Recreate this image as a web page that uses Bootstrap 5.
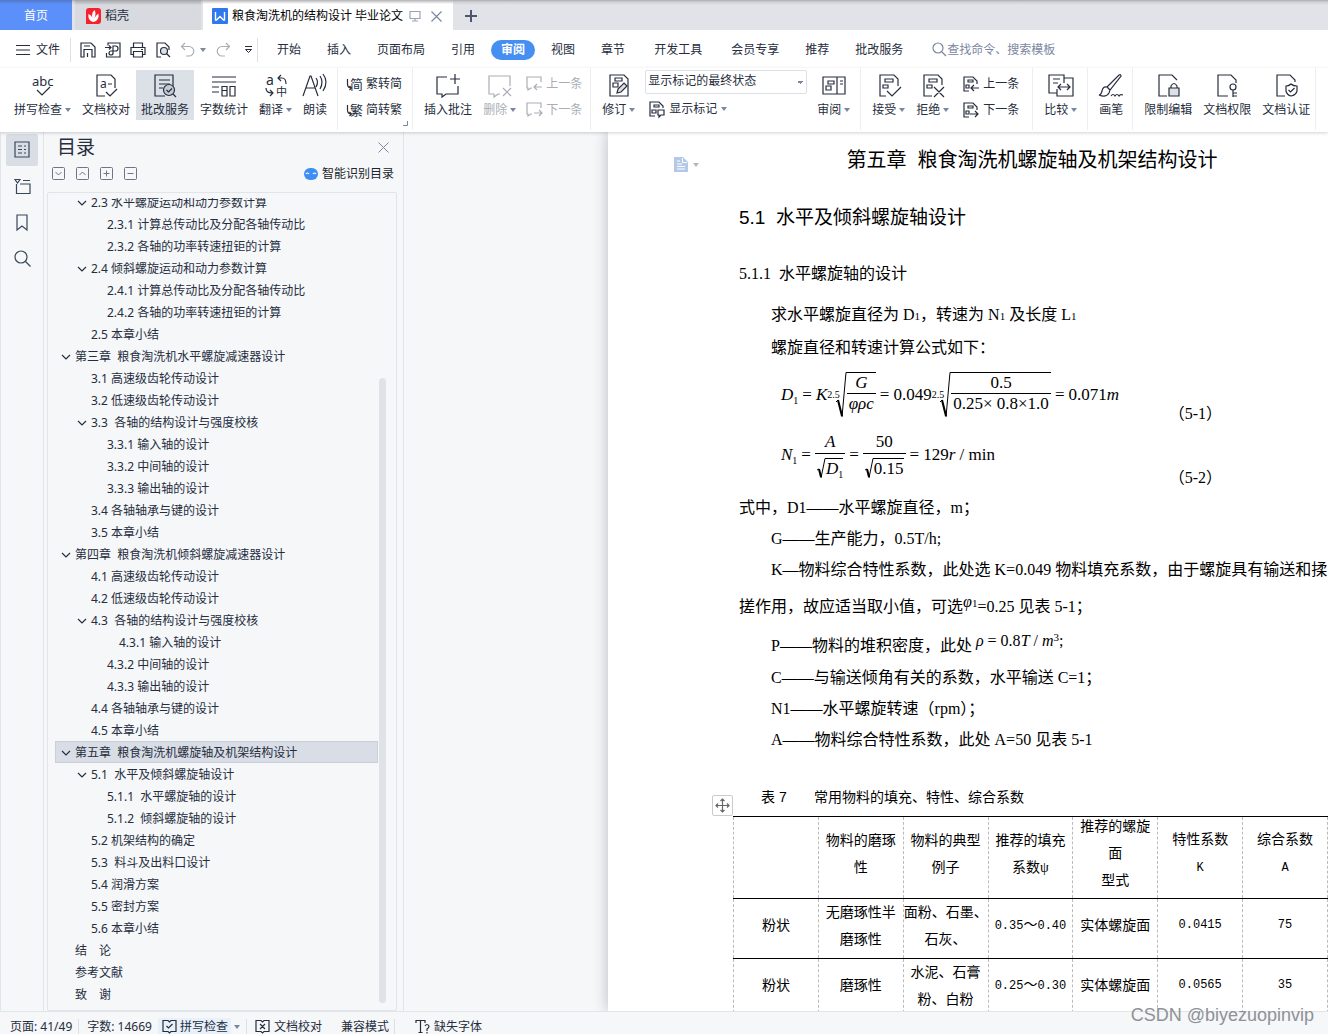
<!DOCTYPE html>
<html lang="zh-CN">
<head>
<meta charset="utf-8">
<meta name="viewport" content="width=device-width, initial-scale=1">
<title>粮食淘洗机的结构设计 毕业论文</title>
<link href="https://cdn.jsdelivr.net/npm/bootstrap@5.3.0/dist/css/bootstrap.min.css" rel="stylesheet">
<script src="https://cdn.jsdelivr.net/npm/bootstrap@5.3.0/dist/js/bootstrap.bundle.min.js"></script>
<style>
:root{--ink:#262d3d;--muted:#7b86a0;--line:#e1e4e9;--pane:#f5f7f9}
body{font-family:"Noto Sans","Noto Sans CJK SC",sans-serif;font-size:12px;line-height:18px;color:var(--ink);background:var(--pane)}
button{font:inherit;color:inherit;background:none;border:0;padding:0;white-space:nowrap}
a{color:inherit;text-decoration:none;white-space:nowrap}
svg{fill:none;stroke:currentColor;stroke-width:1.2;flex:none;display:block;overflow:visible}
svg text{fill:currentColor;stroke:none}
svg.solid{stroke:none}
svg.thin{stroke-width:1}
svg.bold{stroke-width:2}
.caret{border:3px solid transparent;border-top:4px solid var(--muted);border-bottom:0;flex:none}
.muted{color:var(--muted)}
/* title bar */
.titlebar{height:30px;background:linear-gradient(#a9aaad,#cfd0d3 2px,#e1e3e8 5px)}
.titlebar>*{padding-top:2px}
.tab-home{width:72px;background:linear-gradient(#5577c4,#5b90fa 4px);color:#fff}
.tab-doc{width:126px;margin-left:3px;padding-left:11px;background:linear-gradient(#a2a3a6,#d8dadf 5px)}
.tab-live{width:250px;margin-left:2px;padding-left:9px;background:linear-gradient(#b3b3b5,#fff 4px);color:#000}
.tab-new{margin-left:12px;color:#4c566c}
/* menu */
.menubar{height:38px;background:#fff;padding-top:1px}
.menubar .quick{gap:9px;padding-left:9px}
.file-menu{gap:6px;margin:0 10px 0 16px}
.vr-line{width:1px;height:24px;background:#dcdfe5}
.menu-start{margin-right:6px}
.menu-link{padding:0 13px}
.menu-link.shifted{margin-left:3px}
.menu-link.live{margin:0 3px;padding:0 10px;line-height:20px;border-radius:10px;background:#468ff2;color:#fff;font-weight:700}
.finder{border:0;outline:0;padding:0;width:160px;background:none;color:var(--muted)}
.finder::placeholder{color:var(--muted);opacity:1}
/* ribbon */
.ribbon{height:64px;background:#fff;box-shadow:0 1px 3px rgba(40,50,70,.22);position:relative;z-index:2;overflow:clip;overflow-clip-margin:4px}
.tool-group{display:flex;gap:1px;padding:2px 5px 0 6px;border-right:1px solid #eceef1;flex:none;height:62px}
.tool-group.first{padding:2px 5px 0 9px}
.tool{padding:4px 5px 0;height:50px;display:flex;flex-direction:column;align-items:center;gap:3px;flex:none}
.tool.on{background:#dbe1e7}
.tool-label{display:flex;align-items:center;gap:3px;line-height:18px}
.off{color:#a9adb5}
.tool-stack{display:flex;flex-direction:column;gap:8px;padding-top:5px}
.tool-row{display:flex;align-items:center;gap:4px;height:18px}
.markup{display:block;width:162px;height:24px;border:1px solid #dcdfe4;border-radius:2px;padding:0 14px 2px 2px;appearance:none;color:var(--ink);font:inherit;background:linear-gradient(to bottom left,var(--muted) 50%,transparent 50%) 151px 10px/3px 3px no-repeat,linear-gradient(to bottom right,var(--muted) 50%,transparent 50%) 154px 10px/3px 3px no-repeat,#fff}
/* workspace */
.workspace{min-height:0}
.rail{width:44px;border-right:1px solid var(--line);border-left:1px solid var(--line);padding:2px 5px;gap:4px;color:#39465c}
.rail button{width:32px;height:32px;display:flex;align-items:center;justify-content:center;border-radius:2px}
.rail .on{background:#d9dee5}
.toc{width:360px;border-right:1px solid var(--line);padding:0 6px 0 3px}
.toc-head{padding:0 8px 0 10px}
.toc-title{font-size:19px;line-height:30px;font-weight:400;margin:0}
.toc-tools{height:24px;padding:0 3px 0 5px;gap:10px;color:#6d7688}
.toc-frame{border:1px solid var(--line);border-radius:2px;margin-top:6px;padding:5px 10px 0 7px;min-height:0}
.toc-clip{overflow:hidden;min-height:0}
.toc-list{margin:-7px 0 0}
.toc-list a{display:flex;align-items:center;height:22px;padding:2px 0 0 19px;white-space:pre;border:1px solid transparent}
.toc-list a svg{margin:0 4px 0 -14px}
.toc-list .l2{padding-left:35px}
.toc-list .l3{padding-left:51px}
.toc-list .l3x{padding-left:63px}
.toc-list .live{background:#d9dde5;border-color:#c9d0da}
.thumb{width:7px;border-radius:4px;background:#dfe2e6;margin:180px 0 7px 1px}
/* page */
.canvas{padding-left:204px;overflow:hidden}
.sheet{background:#fff;box-shadow:0 0 14px rgba(30,35,50,.28);position:relative;height:100%;padding:1px 3px 0 131px;color:#000;font:16px/31px "Liberation Serif","Noto Sans CJK SC",serif}
.sheet p{margin:0;padding-left:32px;white-space:nowrap}
.sheet p.flush{padding-left:0}
.sheet h1{font:400 20px/54px "Liberation Sans","Noto Sans CJK SC",sans-serif;margin:0;text-align:center;white-space:pre}
.sheet h2{font:400 19px/62px "Liberation Sans","Noto Sans CJK SC",sans-serif;margin:0;white-space:pre}
.sheet h3{font-size:16px;line-height:50px;font-weight:400;margin:0;white-space:pre}
.sheet .intro{line-height:32px}
.low{font-size:11px}
.page-mark{position:absolute;left:66px;top:25px;display:flex;align-items:center;gap:5px;color:#b4c9e6}
.page-mark .caret{border-top-color:#b5b8bd}
.grip{position:absolute;left:104px;top:663px;width:21px;height:21px;border:1px solid #c8cbd0;border-radius:2px;background:#fff;color:#666;display:flex;align-items:center;justify-content:center}
.eq-row{display:flex;justify-content:space-between;align-items:center;max-width:488px;height:61px;padding-left:42px}
.eq-row.second{height:67px;padding-bottom:7px}
.eq{display:flex;align-items:center;font-size:17px;line-height:22px;white-space:nowrap}
.eq-no{align-self:flex-end;line-height:22px;margin-right:5px}
.eq-row.second .eq-no{margin-bottom:-4px}
.eq sub{font-size:10px;line-height:10px;bottom:-4px}
.eq .rel{margin:0 4px}
.fraction{display:flex;flex-direction:column;align-items:stretch;text-align:center}
.fraction>:first-child{border-bottom:1px solid #000}
.fraction>*{padding:0 2px}
.radicand{border-top:1px solid #000;display:block;line-height:20px}
.root{display:flex;align-items:stretch}
.degree{font-size:10px;line-height:10px;padding-top:18px;margin-right:-5px}
.raised{position:relative;top:-5px;line-height:1px}
.tall{line-height:44px}
.mid{line-height:33px}
.caption-line{font:14px/22px "Liberation Sans","Noto Sans CJK SC",sans-serif;margin-top:31px;white-space:pre;padding-left:22px}
.factors{width:calc(100% + 9px);margin:8px -3px 0 -6px;table-layout:fixed;border-collapse:collapse;font-size:14px;line-height:27px;text-align:center}
.factors th,.factors td{border:1px dashed #bbb;border-top:1px solid #000;border-bottom:1px solid #000;padding:0;font-weight:400;height:60px;vertical-align:middle;white-space:nowrap}
.factors th{height:82px}
.factors th div{margin-top:-8px}
.factors td div{margin-top:-6px}
.num{font-family:"Liberation Mono",monospace;font-size:12px}
/* status */
.statusbar{height:23px;border-top:1px solid var(--line);background:var(--pane);padding:7px 0 0 10px;position:relative;z-index:2;white-space:nowrap}
.statusbar .vr-line{height:16px;margin:0 8px 0 6px}
.statusbar .vr-line.roomy{margin:0 20px 0 5px}
.spell{background:#e7f1fb;padding:0 3px 0 4px;gap:3px;margin:0 3px 0 6px}
.compat{margin-left:19px}
.brand{position:absolute;right:14px;top:-9px;font:18px/24px "Liberation Sans",sans-serif;color:#8e9196}
</style>
</head>
<body class="vh-100 d-flex flex-column overflow-hidden">
<header class="flex-shrink-0">
  <div class="titlebar d-flex align-items-stretch">
    <button class="tab-home">首页</button>
    <button class="tab-doc d-flex align-items-center gap-1">
      <svg class="solid" width="15" height="16" viewBox="0 0 15 16"><path d="M3 0h9q3 0 3 3v10q0 3-3 3H0V3q0-3 3-3z" fill="#f5222d"/><path d="M7.5 14C2.500 13 2 9 2.500 6q3 1 4 4Q5 5 8.500 2q2 3 0 8Q10 7 12.500 5.500q1 7-5 8.500z" fill="#fff"/></svg>稻壳</button>
    <div class="tab-live d-flex align-items-center">
      <svg width="16" height="16" viewBox="0 0 16 16"><rect width="16" height="16" rx="1" fill="#2f78ee" stroke="none"/><path d="M3.500 4v8h1L8 8.500l3.500 3.500h1V4" stroke="#fff" stroke-width="1.400"/></svg>
      <a href="#" class="ms-1">粮食淘洗机的结构设计 毕业论文</a>
      <svg class="ms-1 muted opacity-75" width="16" height="14" viewBox="0 0 16 14"><path d="M3 2.500h10v7H3zM8 9.500V12M5 12h6"/></svg>
      <button class="ms-2 muted" aria-label="关闭标签"><svg width="11" height="11" viewBox="0 0 11 11"><path d="m.5.5 10 10M10.500.5l-10 10"/></svg></button>
    </div>
    <button class="tab-new" aria-label="新建"><svg class="bold" width="12" height="12" viewBox="0 0 12 12"><path d="M6 0v12M0 6h12"/></svg></button>
  </div>

  <nav class="menubar d-flex align-items-center">
    <button class="file-menu d-flex align-items-center"><svg class="thin" width="14" height="10" viewBox="0 0 14 10"><path d="M0 .5h14M0 5h14M0 9.500h14"/></svg>文件</button>
    <span class="vr-line"></span>
    <div class="quick d-flex align-items-center">
      <button aria-label="保存"><svg width="16" height="16" viewBox="0 0 16 16"><path d="M1 1h10l4 4v10h-3V7.500H4V15H1zM7.500 11v4M4 4h6"/></svg></button>
      <button aria-label="输出为PDF"><svg width="16" height="16" viewBox="0 0 16 16"><path d="M3 3.500V1h12v14H1.500v-4M0 5.500h6M4 3.500l2 2-2 2M8 12V4h2.500a2 2 0 0 1 0 5H6a2 2 0 1 0 2 2"/></svg></button>
      <button aria-label="打印"><svg width="16" height="16" viewBox="0 0 16 16"><path d="M3.500 5V1h9v4M3.500 12.500H1v-7h14v7h-2.500M3.500 9.500h9V15h-9zM11 7.500h2"/></svg></button>
      <button aria-label="打印预览"><svg width="16" height="16" viewBox="0 0 16 16"><path d="M6 15H2V1h8l4 4v3"/><circle cx="9" cy="9" r="3.500" fill="#dde1e6"/><path d="m11.500 11.500 3.500 3.500"/></svg></button>
      <button class="off d-flex align-items-center gap-1" aria-label="撤销"><svg width="16" height="16" viewBox="0 0 16 16"><path d="M5 1 1.500 4.500 5 8M1.500 4.500H9a4.500 4.500 0 0 1 0 9.500H6"/></svg><span class="caret"></span></button>
      <button class="off" aria-label="恢复"><svg width="16" height="16" viewBox="0 0 16 16"><path d="m11 1 3.500 3.500L11 8M14.500 4.500H7A4.500 4.500 0 0 0 7 14h3"/></svg></button>
      <button aria-label="更多" class="mx-1"><svg class="thin" width="9" height="9" viewBox="0 0 9 9"><path d="M1 1.500h7M1.500 4.500 4.500 7.500l3-3z"/></svg></button>
    </div>
    <span class="vr-line menu-start"></span>
    <a href="#" class="menu-link">开始</a><a href="#" class="menu-link">插入</a><a href="#" class="menu-link">页面布局</a><a href="#" class="menu-link">引用</a><a href="#" class="menu-link live">审阅</a><a href="#" class="menu-link">视图</a><a href="#" class="menu-link">章节</a><a href="#" class="menu-link shifted">开发工具</a><a href="#" class="menu-link shifted">会员专享</a><a href="#" class="menu-link">推荐</a><a href="#" class="menu-link">批改服务</a>
    <label class="d-flex align-items-center ms-3 muted"><svg width="15" height="15" viewBox="0 0 15 15"><circle cx="6" cy="6" r="5"/><path d="m10 10 4 4"/></svg><input class="finder" type="text" placeholder="查找命令、搜索模板" aria-label="查找命令"></label>
  </nav>

  <div class="ribbon d-flex">
    <div class="tool-group first">
      <button class="tool"><svg width="24" height="24" viewBox="0 0 24 24"><text x="1" y="12" font-size="13">abc</text><path d="m6 16 5 5 8-8"/></svg><span class="tool-label">拼写检查<i class="caret"></i></span></button>
      <button class="tool"><svg width="24" height="24" viewBox="0 0 24 24"><path d="M11 22H3V1h14l4 4v9M14 10h4M12 18l4 4 7-7"/><text x="6" y="14" font-size="12">a</text></svg><span class="tool-label">文档校对</span></button>
      <button class="tool on"><svg width="24" height="24" viewBox="0 0 24 24"><path d="M12 22H2V1h18v11M6 6h11M6 10h11M6 14h4"/><circle cx="16" cy="16" r="5.500" fill="#c3cad3"/><path d="m20 20 3 3M13.500 16l2 2 3.500-3.500"/></svg><span class="tool-label">批改服务</span></button>
      <button class="tool"><svg width="24" height="24" viewBox="0 0 24 24"><path d="M0 3h24M0 8h24M0 13h7M0 18h7M10 12.500h5v4h-5zM10 16.500h5V22h-5zM18 12.500h5V22h-5z"/></svg><span class="tool-label">字数统计</span></button>
      <button class="tool"><svg width="24" height="24" viewBox="0 0 24 24"><text x="2" y="11" font-size="14">a</text><text x="12" y="22" font-size="11">中</text><path d="M17 1l-3 3 3 3M14 4h4q4 0 4 6M2 14q0 5 6 5M6 16l3 3-3 3"/></svg><span class="tool-label">翻译<i class="caret"></i></span></button>
      <button class="tool"><svg width="24" height="24" viewBox="0 0 24 24"><path d="M0 22 7 2h1l7 20M3 14h9M13 4q3 4 0 9M17 2q4 6 0 13M20 0q6 8 0 17"/></svg><span class="tool-label">朗读</span></button>
    </div>
    <div class="tool-group ps-2 pe-1">
      <div class="tool-stack">
        <button class="tool-row"><svg width="16" height="16" viewBox="0 0 16 16"><path d="M1.500 3v5q0 4 4 4M3.500 10l2 2-2 2"/><text x="4" y="13" font-size="13">简</text></svg>繁转简</button>
        <button class="tool-row"><svg width="16" height="16" viewBox="0 0 16 16"><path d="M1.500 3v5q0 4 4 4M3.500 10l2 2-2 2"/><text x="4" y="13" font-size="13">繁</text></svg>简转繁</button>
      </div>
      <svg class="align-self-end mb-1 muted thin" width="5" height="5" viewBox="0 0 5 5"><path d="M4.500 0v4.500H0"/></svg>
    </div>
    <div class="tool-group pe-2">
      <button class="tool"><svg width="24" height="24" viewBox="0 0 24 24"><path d="M11 3H1v17h5v3l4-3h12v-8M14 5h10M19 0v10"/></svg><span class="tool-label">插入批注</span></button>
      <button class="tool off"><svg width="24" height="24" viewBox="0 0 24 24"><path d="M12 20h-2l-4 3v-3H1V2h21v10M15 14l8 8M23 14l-8 8"/></svg><span class="tool-label">删除<i class="caret"></i></span></button>
      <div class="tool-stack off ms-1">
        <button class="tool-row"><svg width="16" height="16" viewBox="0 0 16 16"><path d="M6 12H5l-3 2v-2H1V1h14v5M16 11H8M11 8l-3 3 3 3"/></svg>上一条</button>
        <button class="tool-row"><svg width="16" height="16" viewBox="0 0 16 16"><path d="M6 12H5l-3 2v-2H1V1h14v5M8 11h8M13 8l3 3-3 3"/></svg>下一条</button>
      </div>
    </div>
    <div class="tool-group">
      <button class="tool"><svg width="24" height="24" viewBox="0 0 24 24"><path d="M3 1h14l4 4v17H3zM8 4h7v3H8zM6 9h5v4H6z"/><path d="m10 19 1-4 6-6 3 3-6 6z" fill="#dde1e6"/></svg><span class="tool-label">修订<i class="caret"></i></span></button>
      <div class="ms-1">
        <select class="markup" aria-label="标记视图"><option>显示标记的最终状态</option></select>
        <button class="tool-row ms-1 mt-1 pt-1"><svg width="16" height="16" viewBox="0 0 16 16"><path d="M6 15H1V1h9l4 4v2M5 4h5v2H5zM3 9h4v3H3zM9 9h6v5h-3l-2 2v-2H9z"/></svg>显示标记<i class="caret"></i></button>
      </div>
      <button class="tool ms-1"><svg width="24" height="24" viewBox="0 0 24 24"><path d="M1 3h22v17H1zM15 3v17M6 7h6v3H6zM4 12h5v4H4zM18 7h3M18 10h3"/></svg><span class="tool-label">审阅<i class="caret"></i></span></button>
    </div>
    <div class="tool-group">
      <button class="tool"><svg width="24" height="24" viewBox="0 0 24 24"><path d="M9 22H3V1h14l4 4v7M8 5h8v3H8zM6 11h5v3H6zM10 17l5 5 9-9"/></svg><span class="tool-label">接受<i class="caret"></i></span></button>
      <button class="tool me-1"><svg width="24" height="24" viewBox="0 0 24 24"><path d="M11 22H3V1h14l4 4v6M8 5h8v3H8zM6 11h5v3H6zM13 13l10 10M23 13 13 23"/></svg><span class="tool-label">拒绝<i class="caret"></i></span></button>
      <div class="tool-stack ms-1 me-2">
        <button class="tool-row"><svg width="16" height="16" viewBox="0 0 16 16"><path d="M6 15H1V1h9l4 4v3M5 4h5v2H5zM3 9h3v3H3zM16 12H8M11 9l-3 3 3 3"/></svg>上一条</button>
        <button class="tool-row"><svg width="16" height="16" viewBox="0 0 16 16"><path d="M6 15H1V1h9l4 4v3M5 4h5v2H5zM3 9h3v3H3zM7 12h8M12 9l3 3-3 3"/></svg>下一条</button>
      </div>
    </div>
    <div class="tool-group"><button class="tool"><svg width="24" height="24" viewBox="0 0 24 24"><path d="M8 19H0V1h15v8M15 4h9v18H8v-7M4 5h7M4 9h5M9 13h12M12 10l-3 3 3 3M18 10l3 3-3 3"/></svg><span class="tool-label">比较<i class="caret"></i></span></button></div>
    <div class="tool-group pe-1"><button class="tool"><svg width="24" height="24" viewBox="0 0 24 24"><path d="M8 13 20 1q2-1 2 1L11 16zM8 13q-4-1-5 4-1 4-3 4 7 3 10-2l1-3zM12 22q2-3 4 0 2-3 4 0 1-2 4-1"/></svg><span class="tool-label">画笔</span></button></div>
    <div class="tool-group pe-0">
      <button class="tool"><svg width="24" height="24" viewBox="0 0 24 24"><path d="M11 22H3V1h13l5 5M15 14v-2q3-5 6 0v2"/><path d="M13 14h10v8H13z" fill="#dde1e6"/></svg><span class="tool-label">限制编辑</span></button>
      <button class="tool"><svg width="24" height="24" viewBox="0 0 24 24"><path d="M13 22H3V1h13l5 5v3"/><circle cx="18" cy="13" r="3"/><path d="M18 16v7M18 19h4M18 22h4"/></svg><span class="tool-label">文档权限</span></button>
      <button class="tool"><svg width="24" height="24" viewBox="0 0 24 24"><path d="M11 22H3V1h13l5 5v2M12 12q3 0 5-2 2 2 6 2v5q-1 4-6 5-4-1-5-5zM14.500 16l2 2 4-4"/></svg><span class="tool-label">文档认证</span></button>
    </div>
    <button class="tool ms-1"><svg width="24" height="24" viewBox="0 0 24 24"></svg><span class="tool-label">文</span></button>
  </div>
</header>

<main class="workspace d-flex flex-grow-1">
  <nav class="rail d-flex flex-column flex-shrink-0">
    <button class="on" aria-label="目录"><svg width="16" height="18" viewBox="0 0 16 18"><path d="M1 1h14v15H1zM4 5h4M4 8.500h4M4 12h4M10 5h2M10 8.500h2M10 12h2"/></svg></button>
    <button aria-label="章节"><svg width="17" height="17" viewBox="0 0 17 17"><path d="M1 1.500h5L3.500 5zM9 2.500h7M2.500 6v9.500H16V6H6"/></svg></button>
    <button aria-label="书签"><svg width="14" height="17" viewBox="0 0 14 17"><path d="M2 1h10v15l-5-4-5 4z"/></svg></button>
    <button aria-label="查找"><svg width="17" height="17" viewBox="0 0 17 17"><circle cx="7" cy="7" r="6"/><path d="m11.500 11.500 5 5"/></svg></button>
  </nav>
  <aside class="toc d-flex flex-column flex-shrink-0">
    <div class="toc-head d-flex justify-content-between align-items-center"><h2 class="toc-title">目录</h2><button aria-label="关闭目录" class="muted"><svg class="thin" width="11" height="11" viewBox="0 0 11 11"><path d="m.5.5 10 10M10.500.5l-10 10"/></svg></button></div>
    <div class="toc-tools d-flex align-items-center">
      <button aria-label="展开"><svg class="thin" width="14" height="14" viewBox="0 0 14 14"><rect x=".5" y=".5" width="12" height="12" rx="1"/><path d="m3.500 5 3 3 3-3"/></svg></button>
      <button aria-label="收起"><svg class="thin" width="14" height="14" viewBox="0 0 14 14"><rect x=".5" y=".5" width="12" height="12" rx="1"/><path d="m3.500 8 3-3 3 3"/></svg></button>
      <button aria-label="升级"><svg class="thin" width="14" height="14" viewBox="0 0 14 14"><rect x=".5" y=".5" width="12" height="12" rx="1"/><path d="M3.500 6.500h6M6.500 3.500v6"/></svg></button>
      <button aria-label="降级"><svg class="thin" width="14" height="14" viewBox="0 0 14 14"><rect x=".5" y=".5" width="12" height="12" rx="1"/><path d="M3.500 6.500h6"/></svg></button>
      <button class="ms-auto d-flex align-items-center gap-1 text-body"><svg width="14" height="12" viewBox="0 0 14 12"><rect width="14" height="12" rx="6" fill="#3f8ef3" stroke="none"/><path d="M2 6q1.500-2 3 0M9 6q1.500-2 3 0" stroke="#fff"/></svg>智能识别目录</button>
    </div>
    <div class="toc-frame d-flex flex-grow-1">
      <div class="toc-clip flex-grow-1"><div class="toc-list">
        <a href="#" class="l2 fold">2.3 水平螺旋运动和动力参数计算</a>
        <a href="#" class="l3">2.3.1 计算总传动比及分配各轴传动比</a>
        <a href="#" class="l3">2.3.2 各轴的功率转速扭钜的计算</a>
        <a href="#" class="l2 fold">2.4 倾斜螺旋运动和动力参数计算</a>
        <a href="#" class="l3">2.4.1 计算总传动比及分配各轴传动比</a>
        <a href="#" class="l3">2.4.2 各轴的功率转速扭钜的计算</a>
        <a href="#" class="l2">2.5 本章小结</a>
        <a href="#" class="l1 fold">第三章  粮食淘洗机水平螺旋减速器设计</a>
        <a href="#" class="l2">3.1 高速级齿轮传动设计</a>
        <a href="#" class="l2">3.2 低速级齿轮传动设计</a>
        <a href="#" class="l2 fold">3.3  各轴的结构设计与强度校核</a>
        <a href="#" class="l3">3.3.1 输入轴的设计</a>
        <a href="#" class="l3">3.3.2 中间轴的设计</a>
        <a href="#" class="l3">3.3.3 输出轴的设计</a>
        <a href="#" class="l2">3.4 各轴轴承与键的设计</a>
        <a href="#" class="l2">3.5 本章小结</a>
        <a href="#" class="l1 fold">第四章  粮食淘洗机倾斜螺旋减速器设计</a>
        <a href="#" class="l2">4.1 高速级齿轮传动设计</a>
        <a href="#" class="l2">4.2 低速级齿轮传动设计</a>
        <a href="#" class="l2 fold">4.3  各轴的结构设计与强度校核</a>
        <a href="#" class="l3x">4.3.1 输入轴的设计</a>
        <a href="#" class="l3">4.3.2 中间轴的设计</a>
        <a href="#" class="l3">4.3.3 输出轴的设计</a>
        <a href="#" class="l2">4.4 各轴轴承与键的设计</a>
        <a href="#" class="l2">4.5 本章小结</a>
        <a href="#" class="l1 fold live">第五章  粮食淘洗机螺旋轴及机架结构设计</a>
        <a href="#" class="l2 fold">5.1  水平及倾斜螺旋轴设计</a>
        <a href="#" class="l3">5.1.1  水平螺旋轴的设计</a>
        <a href="#" class="l3">5.1.2  倾斜螺旋轴的设计</a>
        <a href="#" class="l2">5.2 机架结构的确定</a>
        <a href="#" class="l2">5.3  料斗及出料口设计</a>
        <a href="#" class="l2">5.4 润滑方案</a>
        <a href="#" class="l2">5.5 密封方案</a>
        <a href="#" class="l2">5.6 本章小结</a>
        <a href="#" class="l1">结　论</a>
        <a href="#" class="l1">参考文献</a>
        <a href="#" class="l1">致　谢</a>
      </div></div>
      <div class="thumb flex-shrink-0"></div>
    </div>
  </aside>

  <section class="canvas flex-grow-1">
    <article class="sheet">
      <div class="page-mark"><svg class="thin" width="14" height="15" viewBox="0 0 14 15"><path d="M0 0h9l5 5v10H0z" fill="currentColor" stroke="none"/><path d="M8.500 1v4.500H13M3 4h3M3 7h5M3 9.500h8M3 12h8" stroke="#fff"/></svg><i class="caret"></i></div>
      <h1>第五章&nbsp; 粮食淘洗机螺旋轴及机架结构设计</h1>
      <h2>5.1  水平及倾斜螺旋轴设计</h2>
      <h3>5.1.1  水平螺旋轴的设计</h3>
      <p class="intro">求水平螺旋直径为 D<span class="low">1</span>，转速为 N<span class="low">1</span> 及长度 L<span class="low">1</span></p>
      <p class="intro">螺旋直径和转速计算公式如下：</p>
      <div class="eq-row">
        <div class="eq">
          <span><i>D</i><sub>1</sub></span><span class="rel">=</span><i>K</i>
          <span class="root"><span class="degree">2.5</span><svg class="thin" width="12" height="46" viewBox="0 0 12 46"><path d="M1 30l2-2M7 45 11 .5h1"/><path d="m3 28 4 16" stroke-width="2"/></svg><span class="radicand"><span class="fraction"><i>G</i><i>φρc</i></span></span></span>
          <span class="rel">=</span><span>0.049</span>
          <span class="root"><span class="degree">2.5</span><svg class="thin" width="12" height="46" viewBox="0 0 12 46"><path d="M1 30l2-2M7 45 11 .5h1"/><path d="m3 28 4 16" stroke-width="2"/></svg><span class="radicand"><span class="fraction"><span>0.5</span><span>0.25× 0.8×1.0</span></span></span></span>
          <span class="rel">=</span><span>0.071<i>m</i></span>
        </div>
        <span class="eq-no">（5-1）</span>
      </div>
      <div class="eq-row second">
        <div class="eq">
          <span><i>N</i><sub>1</sub></span><span class="rel">=</span>
          <span class="fraction"><i>A</i><span class="root pt-1"><svg class="thin" width="9" height="20" viewBox="0 0 9 20"><path d="M0 12l2-1M4 20 8 .5h1"/><path d="m2 11 2 8" stroke-width="2"/></svg><span class="radicand"><i>D</i><sub>1</sub></span></span></span>
          <span class="rel">=</span>
          <span class="fraction"><span>50</span><span class="root pt-1"><svg class="thin" width="9" height="20" viewBox="0 0 9 20"><path d="M0 12l2-1M4 20 8 .5h1"/><path d="m2 11 2 8" stroke-width="2"/></svg><span class="radicand">0.15</span></span></span>
          <span class="rel">=</span><span>129<i>r</i> / min</span>
        </div>
        <span class="eq-no">（5-2）</span>
      </div>
      <p class="flush">式中，D1——水平螺旋直径，m；</p>
      <p>G——生产能力，0.5T/h;</p>
      <p>K—物料综合特性系数，此处选 K=0.049 物料填充系数，由于螺旋具有输送和揉</p>
      <p class="flush tall">搓作用，故应适当取小值，可选<span class="raised"><i>φ</i><span class="low">1</span></span>=0.25 见表 5-1；</p>
      <p class="mid">P——物料的堆积密度，此处 <span class="raised"><i>ρ</i> = 0.8<i>T</i> / <i>m</i><span class="low raised">3</span>;</span></p>
      <p>C——与输送倾角有关的系数，水平输送 C=1；</p>
      <p>N1——水平螺旋转速（rpm）；</p>
      <p>A——物料综合特性系数，此处 A=50 见表 5-1</p>
      <div class="caption-line">表 7       常用物料的填充、特性、综合系数</div>
      <div class="grip"><svg width="15" height="15" viewBox="0 0 15 15"><path d="M7.500 1v13M1 7.500h13M5.500 3l2-2 2 2M5.500 12l2 2 2-2M3 5.500l-2 2 2 2M12 5.500l2 2-2 2"/></svg></div>
      <table class="factors">
        <thead><tr>
          <th></th><th><div>物料的磨琢<br>性</div></th><th><div>物料的典型<br>例子</div></th><th><div>推荐的填充<br>系数ψ</div></th><th><div>推荐的螺旋<br>面<br>型式</div></th><th><div>特性系数<br><span class="num">K</span></div></th><th><div>综合系数<br><span class="num">A</span></div></th>
        </tr></thead>
        <tbody>
          <tr><td><div>粉状</div></td><td><div>无磨琢性半<br>磨琢性</div></td><td><div>面粉、石墨、<br>石灰、</div></td><td><div><span class="num">0.35</span>～<span class="num">0.40</span></div></td><td><div>实体螺旋面</div></td><td><div class="num">0.0415</div></td><td><div class="num">75</div></td></tr>
          <tr><td><div>粉状</div></td><td><div>磨琢性</div></td><td><div>水泥、石膏<br>粉、白粉</div></td><td><div><span class="num">0.25</span>～<span class="num">0.30</span></div></td><td><div>实体螺旋面</div></td><td><div class="num">0.0565</div></td><td><div class="num">35</div></td></tr>
        </tbody>
      </table>
    </article>
  </section>
</main>

<footer class="statusbar d-flex align-items-center flex-shrink-0">
  <span>页面: 41/49</span><span class="vr-line"></span>
  <span>字数: 14669</span>
  <button class="spell d-flex align-items-center"><svg width="15" height="15" viewBox="0 0 15 15"><path d="M6 1.500H1v11h5l1.500 1.500L9 12.500h5v-11H9L7.500 3zM4.500 7l2 2 4-4"/></svg>拼写检查</button><i class="caret"></i>
  <span class="vr-line"></span>
  <button class="d-flex align-items-center gap-1"><svg width="15" height="15" viewBox="0 0 15 15"><path d="M6 1.500H1v11h5l1.500 1.500L9 12.500h5v-11H9L7.500 3zM5 5l5 5M10 5l-5 5"/></svg>文档校对</button>
  <span class="compat">兼容模式</span><span class="vr-line roomy"></span>
  <button class="d-flex align-items-center gap-1"><svg width="15" height="15" viewBox="0 0 15 15"><path d="M1 4V1.500h9V4M5.500 1.500v12M3.500 13.500h4M10 7q2-3 4 0 0 2-2 3v2M12 13v1.500"/></svg>缺失字体</button>
  <span class="brand">CSDN @biyezuopinvip</span>
</footer>
<script>
// Foldable entries get a chevron in front of their title.
document.querySelectorAll('.toc-list .fold').forEach(function (entry) {
  entry.insertAdjacentHTML('afterbegin', '<svg width="10" height="10" viewBox="0 0 10 10"><path d="m1 3 4 4 4-4"/></svg>');
});
</script>
</body>
</html>
